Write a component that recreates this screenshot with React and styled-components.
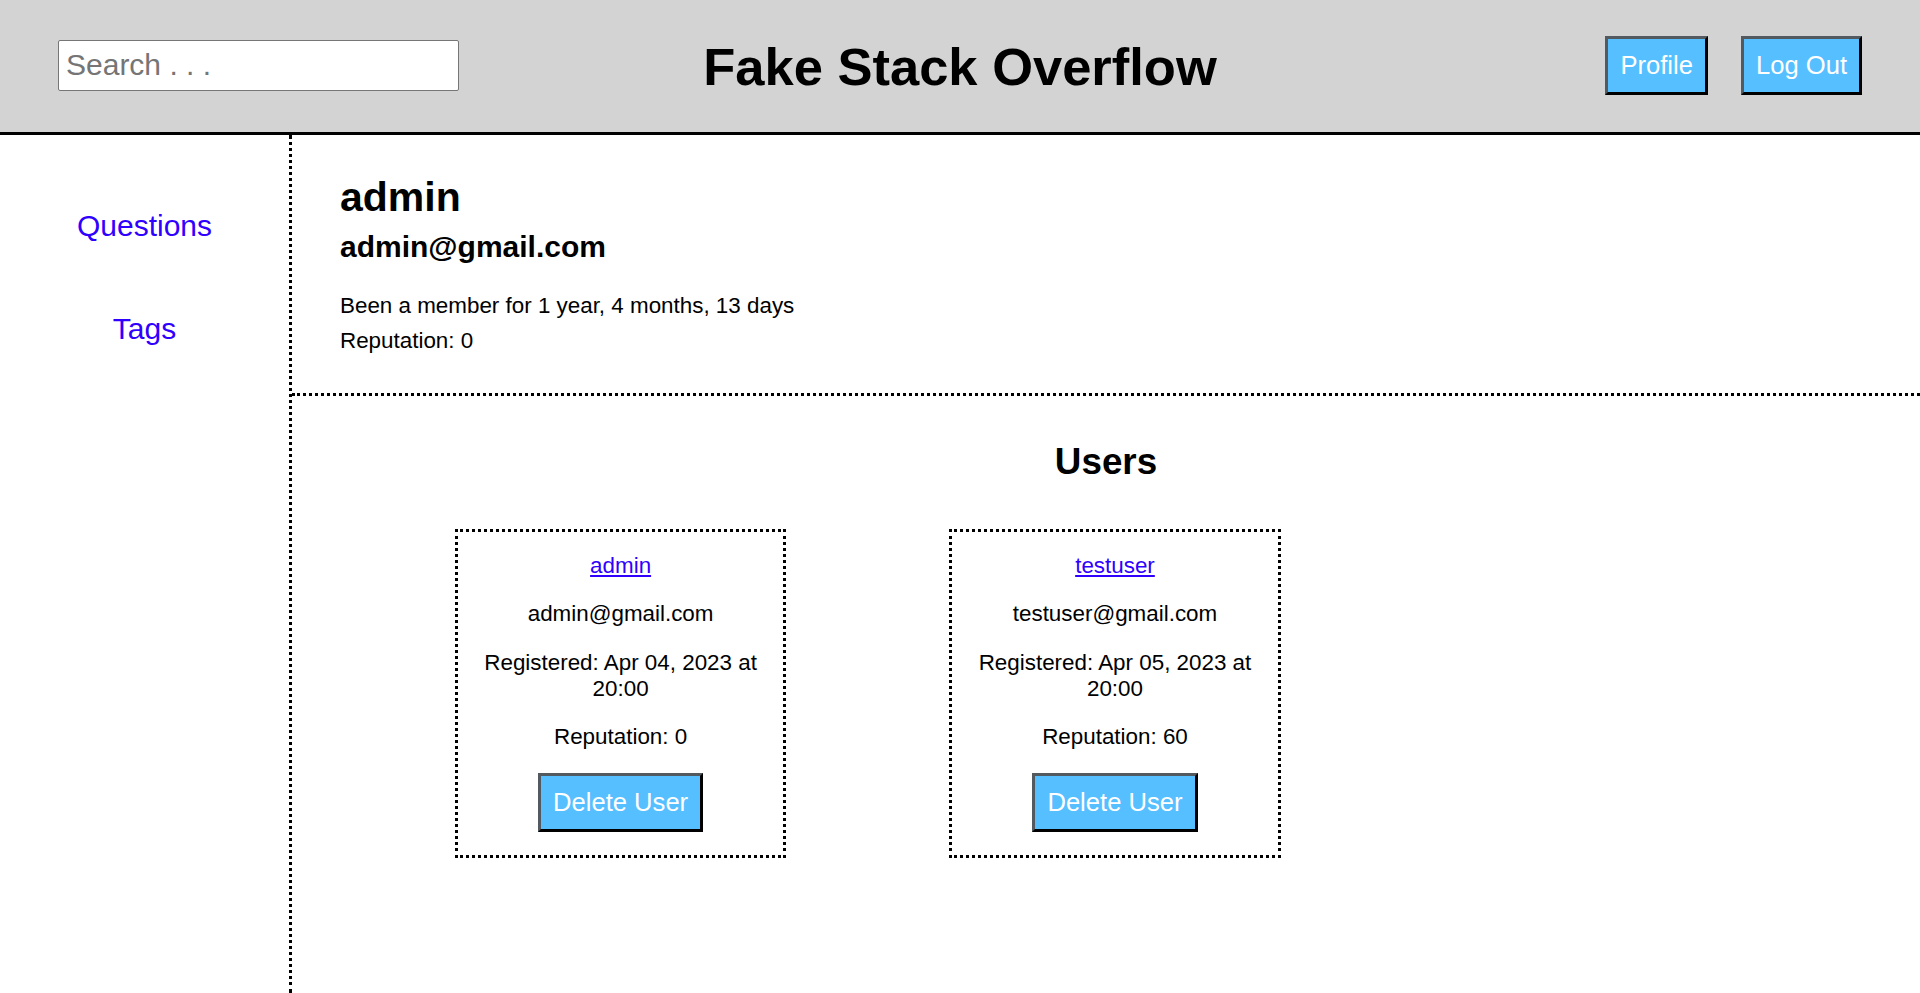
import React from 'react';
import styled, { createGlobalStyle } from 'styled-components';

const GlobalStyle = createGlobalStyle`
  html, body {
    margin: 0;
    padding: 0;
    background: #fff;
    font-family: "Liberation Sans", Arial, sans-serif;
    color: #000;
  }
`;

const Page = styled.div`
  min-height: 100vh;
  display: flex;
  flex-direction: column;
`;

const Header = styled.header`
  height: 132px;
  background-color: #d3d3d3;
  border-bottom: 3px solid #000;
  padding: 0 58px;
  display: grid;
  grid-template-columns: 1fr auto 1fr;
  align-items: center;
`;

const Search = styled.input`
  width: 401px;
  height: 51px;
  box-sizing: border-box;
  margin-top: -2px;
  padding: 0 7px;
  border: 1px solid #767676;
  border-radius: 2px;
  font-family: inherit;
  font-size: 30px;
  background: #fff;

  &::placeholder {
    color: #757575;
  }
`;

const Title = styled.h1`
  margin: 0;
  font-size: 52.5px;
  font-weight: 700;
  text-align: center;
`;

const Actions = styled.div`
  justify-self: end;
  display: flex;
  gap: 33px;
  margin-top: -2px;
`;

const Button = styled.button`
  background-color: #56bfff;
  color: #fff;
  font-family: "Liberation Sans", Arial, sans-serif;
  font-size: 25.6px;
  line-height: normal;
  padding: 12px;
  border: 3px solid;
  border-color: #525a60 #000 #000 #525a60;
  cursor: pointer;
`;

const DeleteButton = styled(Button)`
  display: block;
  margin: 23px auto 23px;
`;

const Body = styled.div`
  flex: 1;
  display: flex;
`;

const Sidebar = styled.nav`
  width: 289px;
  flex-shrink: 0;
  border-right: 3px dotted #000;
  padding-top: 74px;
  display: flex;
  flex-direction: column;
  align-items: center;
  gap: 69px;
`;

const NavLink = styled.a`
  font-size: 30px;
  color: #3000ff;
  text-decoration: none;
`;

const Main = styled.main`
  flex: 1;
`;

const Profile = styled.section`
  padding: 39px 48px 35px;
  border-bottom: 3px dotted #000;
`;

const Username = styled.h2`
  margin: 0 0 9px;
  font-size: 41px;
  line-height: 47px;
`;

const Email = styled.h3`
  margin: 0 0 24px;
  font-size: 30px;
`;

const Stat = styled.p`
  margin: 0;
  font-size: 22.4px;
  line-height: 35px;
`;

const UsersSection = styled.section`
  padding-top: 45px;
`;

const SectionTitle = styled.h2`
  margin: 0 0 46px;
  text-align: center;
  font-size: 36.8px;
`;

const CardList = styled.div`
  display: flex;
  flex-wrap: wrap;
`;

const Card = styled.div`
  width: 20%;
  margin-left: 10%;
  border: 3px dotted #000;
  text-align: center;
  font-size: 22.4px;

  p {
    margin: 1em 0;
  }

  p:first-child {
    margin-top: 21px;
  }
`;

const UserLink = styled.a`
  color: #3000ff;
  text-decoration: underline;
`;

const users = [
  { name: 'admin', email: 'admin@gmail.com', registered: 'Apr 04, 2023 at 20:00', reputation: 0 },
  { name: 'testuser', email: 'testuser@gmail.com', registered: 'Apr 05, 2023 at 20:00', reputation: 60 },
];

const App = () => {
  return (
    <>
      <GlobalStyle />
      <Page>
        <Header>
          <div>
            <Search placeholder="Search . . ." />
          </div>
          <Title>Fake Stack Overflow</Title>
          <Actions>
            <Button>Profile</Button>
            <Button>Log Out</Button>
          </Actions>
        </Header>

        <Body>
          <Sidebar>
            <NavLink href="#">Questions</NavLink>
            <NavLink href="#">Tags</NavLink>
          </Sidebar>

          <Main>
            <Profile>
              <Username>admin</Username>
              <Email>admin@gmail.com</Email>
              <Stat>Been a member for 1 year, 4 months, 13 days</Stat>
              <Stat>Reputation: 0</Stat>
            </Profile>

            <UsersSection>
              <SectionTitle>Users</SectionTitle>
              <CardList>
                {users.map((user) => (
                  <Card key={user.name}>
                    <p>
                      <UserLink href="#">{user.name}</UserLink>
                    </p>
                    <p>{user.email}</p>
                    <p>Registered: {user.registered}</p>
                    <p>Reputation: {user.reputation}</p>
                    <DeleteButton>Delete User</DeleteButton>
                  </Card>
                ))}
              </CardList>
            </UsersSection>
          </Main>
        </Body>
      </Page>
    </>
  );
};

export default App;
